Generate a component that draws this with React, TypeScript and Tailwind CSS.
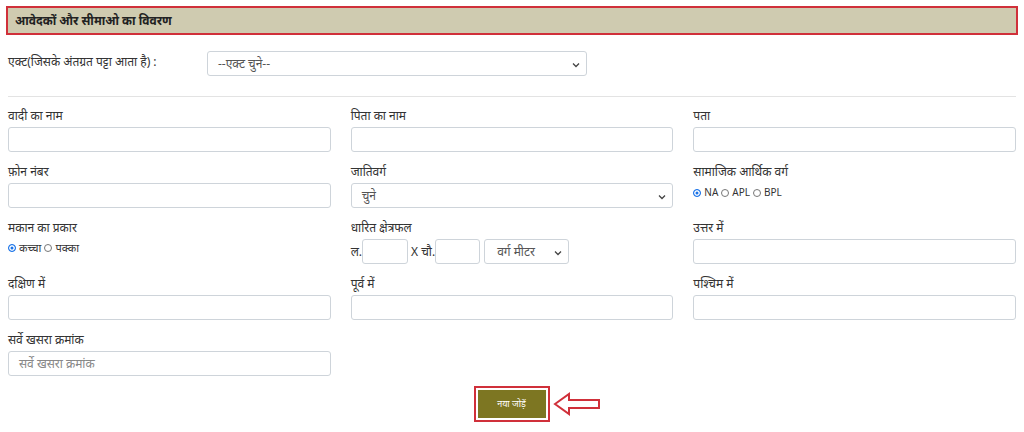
import React from "react";

const inp = "h-[25px] w-full border border-[#ced4da] rounded-[3px] bg-white";
const lbl = "text-[12px] text-[#333] h-[13px] leading-[13px] mb-[5px]";

function Chevron() {
  return (
    <svg width="8" height="8" viewBox="0 0 8 8" className="absolute right-[6px] top-[9px]">
      <path d="M1 2.5 L4 5.5 L7 2.5" stroke="#444" strokeWidth="1.3" fill="none" />
    </svg>
  );
}

function Field({ label, children }: { label: string; children?: React.ReactNode }) {
  return (
    <div className="flex flex-col">
      <div className={lbl}>{label}</div>
      {children ?? <div className={inp} />}
    </div>
  );
}

function Radio({ on }: { on?: boolean }) {
  return (
    <span className={`inline-block w-[8px] h-[8px] rounded-full border ${on ? "border-[#1a73e8] bg-[#1a73e8] shadow-[inset_0_0_0_1.5px_white]" : "border-[#777]"}`} />
  );
}

export default function App() {
  return (
    <div className="w-[1024px] h-[432px] bg-white relative overflow-hidden" style={{ fontFamily: '"Noto Sans", "Liberation Sans", sans-serif' }}>
      <div className="pt-[6px] px-[6px]">
        <div className="h-[29px] border-2 border-[#d0303a] bg-[#cfcbb0] flex items-center pl-[7px] text-[12px] font-bold text-[#222]">
          आवेदकों और सीमाओ का विवरण
        </div>
      </div>
      <div className="flex items-center mt-[16px] px-[8px]">
        <div className="w-[199px] text-[12px] text-[#333] -mt-[4px]">एक्ट(जिसके अंतग्रत पट्टा आता है) :</div>
        <div className={`relative ${inp} !w-[380px] text-[12px] text-[#555] flex items-center pl-[10px]`}>
          --एक्ट चुने--<Chevron />
        </div>
      </div>
      <div className="mx-[8px] mt-[20px] border-t border-[#e3e3e3]" />
      <div className="px-[8px] mt-[12px] grid grid-cols-3 gap-x-[20px] gap-y-[13px]">
        <Field label="वादी का नाम" />
        <Field label="पिता का नाम" />
        <Field label="पता" />
        <Field label="फ़ोन नंबर" />
        <Field label="जातिवर्ग">
          <div className={`relative ${inp} text-[12px] text-[#555] flex items-center pl-[10px]`}>चुने<Chevron /></div>
        </Field>
        <Field label="सामाजिक आर्थिक वर्ग">
          <div className="h-[25px] flex items-start gap-[3px] text-[10px] text-[#333] pt-[2px]">
            <span className="flex items-center gap-[3px]"><Radio on />NA</span>
            <span className="flex items-center gap-[3px]"><Radio />APL</span>
            <span className="flex items-center gap-[3px]"><Radio />BPL</span>
          </div>
        </Field>
        <Field label="मकान का प्रकार">
          <div className="h-[25px] flex items-start gap-[3px] text-[11px] text-[#333] pt-[1px]">
            <span className="flex items-center gap-[3px]"><Radio on />कच्चा</span>
            <span className="flex items-center gap-[3px]"><Radio />पक्का</span>
          </div>
        </Field>
        <Field label="धारित क्षेत्रफल">
          <div className="h-[25px] flex items-center text-[12px] text-[#333]">
            <span>ल.</span>
            <div className="h-[25px] w-[46px] border border-[#ced4da] rounded-[3px]" />
            <span className="ml-[3px]">X चौ.</span>
            <div className="h-[25px] w-[45px] border border-[#ced4da] rounded-[3px]" />
            <div className="relative h-[25px] w-[85px] ml-[4px] border border-[#ced4da] rounded-[3px] flex items-center pl-[12px] text-[#555]">वर्ग मीटर<Chevron /></div>
          </div>
        </Field>
        <Field label="उत्तर में" />
        <Field label="दक्षिण में" />
        <Field label="पूर्व में" />
        <Field label="पश्चिम में" />
        <Field label="सर्वे खसरा क्रमांक">
          <div className={`${inp} text-[12px] text-[#888] flex items-center pl-[10px]`}>सर्वे खसरा क्रमांक</div>
        </Field>
      </div>
      <div className="flex justify-center items-center mt-[10px] pl-[50px]">
        <div className="border-2 border-[#d0303a] p-[2px]">
          <div className="w-[68px] h-[28px] bg-[#7d7622] text-white text-[9px] flex items-center justify-center">नया जोड़ें</div>
        </div>
        <svg width="48" height="24" viewBox="0 0 48 24" className="ml-[3px]">
          <path d="M2 12 L16 2 L16 8 L46 8 L46 16 L16 16 L16 22 Z" fill="white" stroke="#d0303a" strokeWidth="2" />
        </svg>
      </div>
    </div>
  );
}
